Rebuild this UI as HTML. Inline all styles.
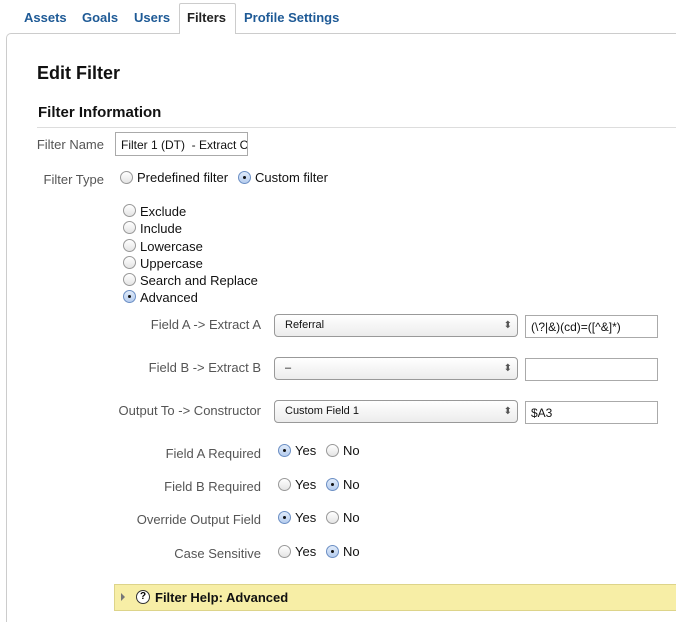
<!DOCTYPE html>
<html style="overflow:hidden;height:622px"><head><style>
*{box-sizing:border-box}
body{margin:0;width:676px;height:622px;background:#fff;font-family:"Liberation Sans",Arial,sans-serif;position:relative;overflow:hidden}
.a{position:absolute;white-space:nowrap}
.tab{font-weight:bold;font-size:13px;color:#1e5a96;top:10px}
.lbl{font-size:13px;color:#555;text-align:right;right:415px}
.r{position:absolute;width:13px;height:13px;border-radius:50%;border:1px solid #999;background:linear-gradient(#fff,#e4e4e4)}
.r.on{border-color:#6c8fc4;background:linear-gradient(#dfeaf9,#b6cdef)}
.r.on:after{content:"";position:absolute;left:4px;top:4px;width:3px;height:3px;border-radius:50%;background:#111}
.t{font-size:13px;color:#111}
.sel{position:absolute;left:274px;width:244px;height:23px;border:1px solid #999;border-radius:4px;background:linear-gradient(#fff,#ececec);font-size:11px;padding:4px 10px;color:#111}
.sel:after{content:"⬍";position:absolute;right:5px;top:5px;font-size:10px;color:#555}
.inp{position:absolute;left:525px;width:133px;height:23px;border:1px solid #aaa;font-size:12px;padding:4px 5px;color:#111}
</style></head><body>
<div class="a tab" style="left:24px">Assets</div>
<div class="a tab" style="left:82px">Goals</div>
<div class="a tab" style="left:134px">Users</div>
<div class="a" style="left:179px;top:3px;width:57px;height:31px;border:1px solid #ccc;border-bottom:none;background:#fff;z-index:2;border-radius:2px 2px 0 0"></div>
<div class="a tab" style="left:187px;color:#222;z-index:3">Filters</div>
<div class="a tab" style="left:244px">Profile Settings</div>
<div class="a" style="left:6px;top:33px;width:670px;height:589px;border:1px solid #ccc;border-right:none;border-bottom:none;border-radius:5px 0 0 0"></div>
<div class="a" style="left:37px;top:63px;font-size:18px;font-weight:bold;color:#111">Edit Filter</div>
<div class="a" style="left:38px;top:104px;font-size:15px;font-weight:bold;color:#111">Filter Information</div>
<div class="a" style="left:37px;top:127px;width:639px;border-top:1px solid #ddd"></div>
<div class="a lbl" style="left:0;right:572px;top:137px">Filter Name</div>
<div class="a" style="left:115px;top:132px;width:133px;height:24px;border:1px solid #aaa;font-size:12px;padding:5px 5px;color:#111;overflow:hidden">Filter 1 (DT)&nbsp; - Extract C</div>
<div class="a lbl" style="left:0;right:572px;top:172px">Filter Type</div>
<div class="r" style="left:120px;top:171px"></div><div class="a t" style="left:137px;top:170px">Predefined filter</div>
<div class="r on" style="left:238px;top:171px"></div><div class="a t" style="left:255px;top:170px">Custom filter</div>
<div class="r" style="left:123px;top:204px"></div><div class="a t" style="left:140px;top:204px">Exclude</div>
<div class="r" style="left:123px;top:221px"></div><div class="a t" style="left:140px;top:221px">Include</div>
<div class="r" style="left:123px;top:239px"></div><div class="a t" style="left:140px;top:239px">Lowercase</div>
<div class="r" style="left:123px;top:256px"></div><div class="a t" style="left:140px;top:256px">Uppercase</div>
<div class="r" style="left:123px;top:273px"></div><div class="a t" style="left:140px;top:273px">Search and Replace</div>
<div class="r on" style="left:123px;top:290px"></div><div class="a t" style="left:140px;top:290px">Advanced</div>
<div class="a lbl" style="top:317px">Field A -&gt; Extract A</div>
<div class="sel" style="top:314px">Referral</div><div class="inp" style="top:315px">(\?|&amp;)(cd)=([^&amp;]*)</div>
<div class="a lbl" style="top:360px">Field B -&gt; Extract B</div>
<div class="sel" style="top:357px">–</div><div class="inp" style="top:358px"></div>
<div class="a lbl" style="top:403px">Output To -&gt; Constructor</div>
<div class="sel" style="top:400px">Custom Field 1</div><div class="inp" style="top:401px">$A3</div>
<div class="a lbl" style="top:446px">Field A Required</div>
<div class="r on" style="left:278px;top:444px"></div><div class="a t" style="left:295px;top:443px">Yes</div><div class="r" style="left:326px;top:444px"></div><div class="a t" style="left:343px;top:443px">No</div>
<div class="a lbl" style="top:479px">Field B Required</div>
<div class="r" style="left:278px;top:478px"></div><div class="a t" style="left:295px;top:477px">Yes</div><div class="r on" style="left:326px;top:478px"></div><div class="a t" style="left:343px;top:477px">No</div>
<div class="a lbl" style="top:512px">Override Output Field</div>
<div class="r on" style="left:278px;top:511px"></div><div class="a t" style="left:295px;top:510px">Yes</div><div class="r" style="left:326px;top:511px"></div><div class="a t" style="left:343px;top:510px">No</div>
<div class="a lbl" style="top:546px">Case Sensitive</div>
<div class="r" style="left:278px;top:545px"></div><div class="a t" style="left:295px;top:544px">Yes</div><div class="r on" style="left:326px;top:545px"></div><div class="a t" style="left:343px;top:544px">No</div>
<div class="a" style="left:114px;top:584px;width:562px;height:27px;background:#f7eea6;border:1px solid #ddd48a;border-right:none"></div>
<div class="a" style="left:121px;top:593px;width:0;height:0;border-left:4px solid #777;border-top:4px solid transparent;border-bottom:4px solid transparent"></div>
<div class="a" style="left:136px;top:590px;width:14px;height:14px;border:1px solid #333;border-radius:50%;background:#fff;font-size:10px;font-weight:bold;text-align:center;line-height:12px">?</div>
<div class="a" style="left:155px;top:590px;font-size:13px;font-weight:bold;color:#111">Filter Help: Advanced</div>
</body></html>
